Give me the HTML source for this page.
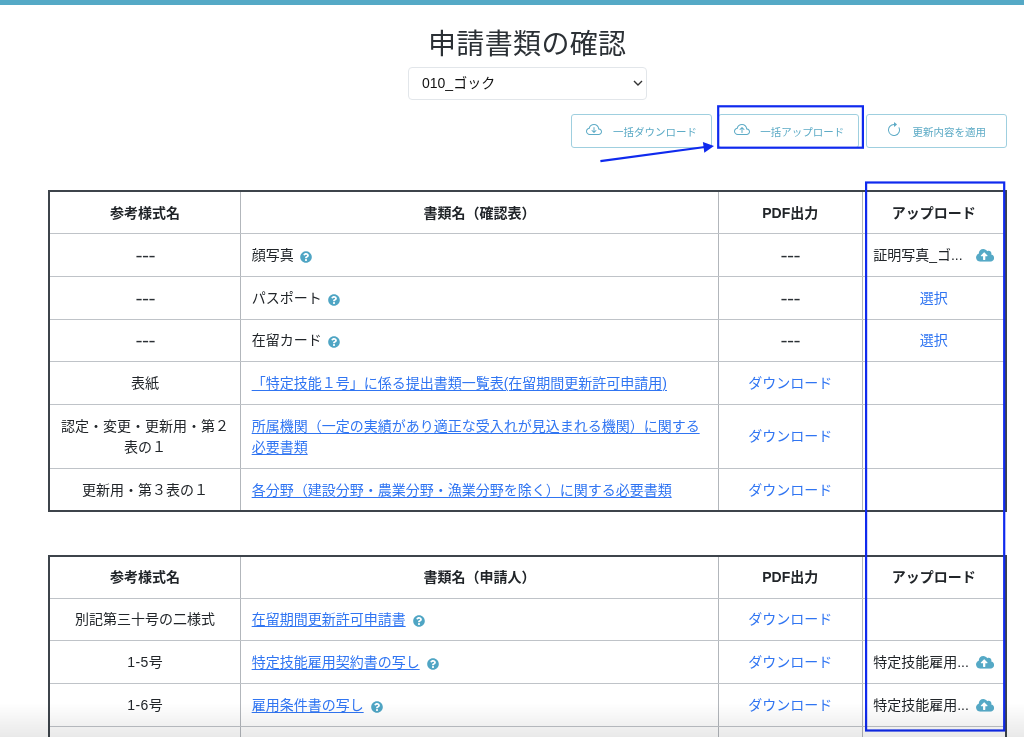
<!DOCTYPE html>
<html lang="ja">
<head>
<meta charset="utf-8">
<title>申請書類の確認</title>
<style>
*{box-sizing:border-box;margin:0;padding:0}
html,body{width:1024px;height:737px;overflow:hidden;background:#fff}
body{position:relative;font-family:"Liberation Sans","Noto Sans CJK JP",sans-serif;color:#212529;font-size:14px;line-height:21.33px}
.topbar{position:absolute;left:0;top:0;width:1024px;height:5px;background:#55a9c6}
h1{letter-spacing:.35px;position:absolute;left:0;top:24.700px;width:1054.500px;text-align:center;font-size:28px;font-weight:400;line-height:40px;color:#2b3035}
.sel{position:absolute;left:408px;top:67px;width:239px;height:33.400px;border:1px solid #e2e6ea;border-radius:4px;background:#fff;font-size:14px;line-height:31px;padding-left:13px;color:#111}
.sel svg{position:absolute;right:3px;top:12.200px}
.btn{position:absolute;top:114px;width:141px;height:34px;border:1px solid #9fcfdf;border-radius:3px;color:#5dabc6;font-size:10.5px;line-height:32px;background:#fff}
.btn svg{position:absolute;top:7px;fill:#5dabc6}
.btn span{position:absolute;top:.500px;white-space:nowrap}
table{position:absolute;left:48px;width:959px;border-collapse:collapse;table-layout:fixed;border:2px solid #3d444b}
th,td{border:1px solid;border-color:#bfc3c8 #b2b6bb;padding:2px 10.67px 0;height:43px;vertical-align:middle;text-align:center;font-weight:400}
th{font-weight:700;height:42px}
tr.s td{height:42px}
td.l{text-align:left}
td.u{text-align:left;position:relative;white-space:nowrap}
td.u svg{position:absolute;left:113px;top:15.400px;fill:#55a9c6}
a{color:#3075f2;text-decoration:underline;text-underline-offset:1.500px;text-decoration-thickness:1px}
a.n{text-decoration:none}
.q{display:inline-block;width:12px;height:12px;vertical-align:-3.100px;margin-left:6.500px;fill:#4fa5c4}
.d{display:inline-block;font-size:18px;line-height:18px;letter-spacing:-.53px;margin-right:-.53px;transform:scaleX(1.18);position:relative;top:2.100px;color:#2b3035}
.ann{position:absolute;border:2px solid #0f2aee}
.shade{position:absolute;left:0;bottom:0;width:1024px;height:34px;background:linear-gradient(to bottom,rgba(0,0,0,0),rgba(0,0,0,.085))}
</style>
</head>
<body><div id="w" style="position:absolute;left:0;top:0;width:1024px;height:737px;will-change:transform">
<svg width="0" height="0" style="position:absolute">
<defs>
<symbol id="q" viewBox="0 0 512 512"><path d="M504 256c0 136.997-111.043 248-248 248S8 392.997 8 256C8 119.083 119.043 8 256 8s248 111.083 248 248zM262.655 90c-54.497 0-89.255 22.957-116.549 63.758-3.536 5.286-2.353 12.415 2.715 16.258l34.699 26.31c5.205 3.947 12.621 3.008 16.665-2.122 17.864-22.658 30.113-35.797 57.303-35.797 20.429 0 45.698 13.148 45.698 32.958 0 14.976-12.363 22.667-32.534 33.976C247.128 238.528 216 254.941 216 296v4c0 6.627 5.373 12 12 12h56c6.627 0 12-5.373 12-12v-1.333c0-28.462 83.186-29.647 83.186-106.667 0-58.002-60.165-102-116.531-102zM256 338c-25.365 0-46 20.635-46 46 0 25.364 20.635 46 46 46s46-20.636 46-46c0-25.365-20.635-46-46-46z"/></symbol>
<symbol id="cu" viewBox="0 32 640 448"><path d="M537.6 226.6c4.100-10.700 6.400-22.400 6.400-34.600 0-53-43-96-96-96-19.700 0-38.100 6-53.300 16.200C367 64.200 315.300 32 256 32c-88.400 0-160 71.600-160 160 0 2.700.1 5.400.2 8.100C40.200 219.800 0 273.200 0 336c0 79.500 64.500 144 144 144h368c70.700 0 128-57.300 128-128 0-61.900-44-113.600-102.400-125.400zM393.400 288H328v112c0 8.800-7.200 16-16 16h-48c-8.800 0-16-7.200-16-16V288h-65.400c-14.300 0-21.400-17.200-11.300-27.300l105.400-105.400c6.200-6.200 16.400-6.200 22.600 0l105.400 105.400c10.100 10.100 2.900 27.300-11.300 27.300z"/></symbol>
<symbol id="cl" viewBox="0 0 16 16"><path d="M4.406 3.342A5.530 5.530 0 0 1 8 2c2.690 0 4.923 2 5.166 4.579C14.758 6.804 16 8.137 16 9.773 16 11.569 14.502 13 12.687 13H3.781C1.708 13 0 11.366 0 9.318c0-1.763 1.266-3.223 2.942-3.593.143-.863.698-1.723 1.464-2.383zm.653.757c-.757.653-1.153 1.440-1.153 2.056v.448l-.445.049C2.064 6.805 1 7.952 1 9.318 1 10.785 2.230 12 3.781 12h8.906C13.980 12 15 10.988 15 9.773c0-1.216-1.020-2.228-2.313-2.228h-.5v-.5C12.188 4.825 10.328 3 8 3a4.530 4.530 0 0 0-2.941 1.100z"/></symbol>
</defs>
</svg>
<div class="topbar"></div>
<h1>申請書類の確認</h1>
<div class="sel">010_ゴック<svg width="10" height="6" viewBox="0 0 10 6"><path d="M1 1l4 4 4-4" fill="none" stroke="#333" stroke-width="1.4"/></svg></div>

<div class="btn" style="left:571px"><svg width="16" height="16" viewBox="0 0 16 16" style="left:14px"><use href="#cl"/><path d="M7.646 10.854a.5.5 0 0 0 .708 0l2-2a.5.5 0 0 0-.708-.708L8.500 9.293V5.500a.5.5 0 0 0-1 0v3.793L6.354 8.146a.5.5 0 1 0-.708.708l2 2z"/></svg><span style="left:41px">一括ダウンロード</span></div>
<div class="btn" style="left:718.300px"><svg width="16" height="16" viewBox="0 0 16 16" style="left:14.500px"><use href="#cl"/><path d="M7.646 5.146a.5.5 0 0 1 .708 0l2 2a.5.5 0 0 1-.708.708L8.500 6.707V10.500a.5.5 0 0 1-1 0V6.707L6.354 7.854a.5.5 0 1 1-.708-.708l2-2z"/></svg><span style="left:41px">一括アップロード</span></div>
<div class="btn" style="left:866px"><svg width="16" height="16" viewBox="0 0 16 16" style="left:19px"><path d="M8 3a5 5 0 1 0 4.546 2.914.5.5 0 0 1 .908-.417A6 6 0 1 1 8 2v1z"/><path d="M8 4.466V.534a.25.25 0 0 1 .41-.192l2.360 1.966c.12.1.12.284 0 .384L8.410 4.658A.25.25 0 0 1 8 4.466z"/></svg><span style="left:45.500px">更新内容を適用</span></div>

<table style="top:190px">
<colgroup><col style="width:191.500px"><col style="width:478px"><col style="width:143.500px"><col></colgroup>
<tr><th>参考様式名</th><th>書類名（確認表）</th><th>PDF出力</th><th>アップロード</th></tr>
<tr><td><span class="d">---</span></td><td class="l">顔写真<svg class="q"><use href="#q"/></svg></td><td><span class="d">---</span></td><td class="u">証明写真_ゴ...<svg width="18.2" height="12.700"><use href="#cu"/></svg></td></tr>
<tr><td><span class="d">---</span></td><td class="l">パスポート<svg class="q"><use href="#q"/></svg></td><td><span class="d">---</span></td><td><a class="n">選択</a></td></tr>
<tr class="s"><td><span class="d">---</span></td><td class="l">在留カード<svg class="q"><use href="#q"/></svg></td><td><span class="d">---</span></td><td><a class="n">選択</a></td></tr>
<tr><td>表紙</td><td class="l"><a>「特定技能１号」に係る提出書類一覧表(在留期間更新許可申請用)</a></td><td><a class="n">ダウンロード</a></td><td></td></tr>
<tr><td style="height:64px">認定・変更・更新用・第２<br>表の１</td><td class="l"><a>所属機関（一定の実績があり適正な受入れが見込まれる機関）に関する<br>必要書類</a></td><td><a class="n">ダウンロード</a></td><td></td></tr>
<tr><td>更新用・第３表の１</td><td class="l"><a>各分野（建設分野・農業分野・漁業分野を除く）に関する必要書類</a></td><td><a class="n">ダウンロード</a></td><td></td></tr>
</table>

<table style="top:554.5px">
<colgroup><col style="width:191.500px"><col style="width:478px"><col style="width:143.500px"><col></colgroup>
<tr><th style="height:42.5px">参考様式名</th><th>書類名（申請人）</th><th>PDF出力</th><th>アップロード</th></tr>
<tr class="s"><td>別記第三十号の二様式</td><td class="l"><a>在留期間更新許可申請書</a><svg class="q" style="margin-left:7.500px"><use href="#q"/></svg></td><td><a class="n">ダウンロード</a></td><td></td></tr>
<tr><td><span style="letter-spacing:.5px">1-5</span>号</td><td class="l"><a>特定技能雇用契約書の写し</a><svg class="q" style="margin-left:7.500px"><use href="#q"/></svg></td><td><a class="n">ダウンロード</a></td><td class="u">特定技能雇用...<svg width="18.2" height="12.700"><use href="#cu"/></svg></td></tr>
<tr><td><span style="letter-spacing:.5px">1-6</span>号</td><td class="l"><a>雇用条件書の写し</a><svg class="q" style="margin-left:7.500px"><use href="#q"/></svg></td><td><a class="n">ダウンロード</a></td><td class="u">特定技能雇用...<svg width="18.2" height="12.700"><use href="#cu"/></svg></td></tr>
<tr><td></td><td></td><td></td><td></td></tr>
</table>

<svg style="position:absolute;left:0;top:0" width="1024" height="737"><rect x="718.200" y="106.300" width="144.700" height="41.400" fill="none" stroke="#0f2aee" stroke-width="2.200"/><rect x="866.100" y="182.500" width="138.100" height="548" fill="none" stroke="#0f2aee" stroke-width="2.200"/><path d="M600.400 161.100L705 147" stroke="#0f2aee" stroke-width="2.200" fill="none"/><path d="M714 145.900L702.900 142 704.300 152.800z" fill="#0f2aee"/></svg>
<div class="shade"></div>
</div></body>
</html>
